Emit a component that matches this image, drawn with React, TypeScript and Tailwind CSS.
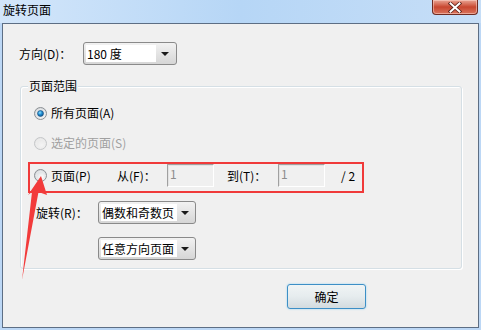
import React from "react";

const FONT = { fontFamily: '"Noto Sans CJK SC", "Noto Sans", sans-serif' };

function Radio({ id, checked, disabled }: { id: string; checked?: boolean; disabled?: boolean }) {
  return (
    <svg width="13" height="13" viewBox="0 0 13 13" className="shrink-0">
      <defs>
        <radialGradient id={`bg-${id}`} cx="0.6" cy="0.65" r="0.7">
          <stop offset="0" stopColor={disabled ? "#f4f4f4" : "#ffffff"} />
          <stop offset="1" stopColor={disabled ? "#e4e4e4" : "#cfd3d6"} />
        </radialGradient>
        <radialGradient id={`dot-${id}`} cx="0.4" cy="0.35" r="0.7">
          <stop offset="0" stopColor="#8fe0ff" />
          <stop offset="0.5" stopColor="#1c8ad0" />
          <stop offset="1" stopColor="#0d4f8a" />
        </radialGradient>
      </defs>
      <circle cx="6.5" cy="6.5" r="6" fill={`url(#bg-${id})`} stroke={disabled ? "#c4c6c8" : "#8c9094"} strokeWidth="1" />
      <circle cx="6.5" cy="6.5" r="4.2" fill="none" stroke={disabled ? "#eeeeee" : "#e8eaec"} strokeWidth="0.8" />
      {checked && <circle cx="6.5" cy="6.5" r="3" fill={`url(#dot-${id})`} stroke="#1a4f7c" strokeWidth="0.6" />}
    </svg>
  );
}

function Select({ text, width, whiteWidth }: { text: string; width: number; whiteWidth: number }) {
  return (
    <div
      className="h-[23px] rounded-[3px] border border-[#8a8a8a] bg-gradient-to-b from-[#f2f2f2] to-[#d6d6d6] flex items-center p-[2px] shrink-0"
      style={{ width }}
    >
      <div
        className="h-full bg-white flex items-center pl-[1px] text-[12px] leading-[16px] text-black whitespace-nowrap overflow-hidden"
        style={{ width: whiteWidth }}
      >
        {text}
      </div>
      <div className="flex-1 flex items-center justify-center">
        <svg width="8" height="4" viewBox="0 0 8 4">
          <polygon points="0,0 8,0 4,4" fill="#1a1a1a" />
        </svg>
      </div>
    </div>
  );
}

function DisabledInput() {
  return (
    <div className="w-[47px] h-[23px] border-t border-l border-t-[#a0a0a0] border-l-[#a0a0a0] border-b border-r border-b-[#ffffff] border-r-[#ffffff] bg-[#f0f0f0] shadow-[inset_1px_1px_0_#e3e3e3] text-[12px] leading-[16px] text-[#8d8d8d] pl-[2px] pt-[1px] shrink-0">
      1
    </div>
  );
}

export default function App() {
  return (
    <div className="relative w-[481px] h-[330px] overflow-hidden bg-[#bcd7f5]" style={FONT}>
      {/* Title bar */}
      <div className="h-[23px] flex items-start bg-gradient-to-r from-[#d3e6fa] via-[#b6d6f6] to-[#c6def7] relative">
        <div className="pl-[3px] pt-[2px] text-[12px] leading-[16px] text-black">旋转页面</div>
        <div className="absolute left-[432px] top-0 w-[46px] h-[15px] rounded-b-[4px] border border-t-0 border-[#6e2b22] bg-gradient-to-b from-[#e8a494] via-[#c8462f] to-[#d9735c] flex items-center justify-center shadow-[inset_0_0_0_1px_rgba(255,220,210,0.5)]">
          <svg width="14" height="11" viewBox="0 0 14 11">
            <path d="M2.5 1.5 L11.5 9.5 M11.5 1.5 L2.5 9.5" stroke="#5a1f17" strokeWidth="3.6" strokeLinecap="square" />
            <path d="M2.5 1.5 L11.5 9.5 M11.5 1.5 L2.5 9.5" stroke="#ffffff" strokeWidth="2" strokeLinecap="square" />
          </svg>
        </div>
      </div>

      {/* Client area */}
      <div className="ml-[2px] w-[477px] h-[305px] border border-[#5d6e84] bg-[#f0f0f0] text-[12px] leading-[16px] text-black">
        {/* Direction row */}
        <div className="mt-[18px] h-[23px] flex items-center pl-[16px]">
          <div className="w-[64px]">方向(D)：</div>
          <Select text="180 度" width={94} whiteWidth={70} />
        </div>

        {/* Group box */}
        <div className="relative ml-[17px] mt-[21px] w-[442px] h-[183px] border border-[#d5dfe5] rounded-[3px] shadow-[inset_1px_1px_0_#ffffff,1px_1px_0_#ffffff]">
          <div className="absolute left-[7px] top-[-9px] px-[1px] bg-[#f0f0f0] leading-[16px]">页面范围</div>

          <div className="flex flex-col">
            <div className="mt-[18px] h-[16px] pl-[13px] flex items-center gap-[4px]">
              <Radio id="a" checked />
              <span>所有页面(A)</span>
            </div>
            <div className="mt-[14px] h-[16px] pl-[13px] flex items-center gap-[4px] text-[#a0a0a0]">
              <Radio id="s" disabled />
              <span>选定的页面(S)</span>
            </div>

            <div className="mt-[11px] ml-[7px] w-[336px] h-[31px] border-2 border-[#f03a3a] flex items-start">
              <div className="h-[23px] flex items-center pl-[4px]">
                <Radio id="p" />
                <span className="ml-[4px] w-[66px]">页面(P)</span>
                <span className="w-[50px]">从(F)：</span>
                <DisabledInput />
                <span className="ml-[13px] w-[51px]">到(T)：</span>
                <DisabledInput />
                <span className="ml-[16px]">/ 2</span>
              </div>
            </div>

            <div className="mt-[8px] h-[23px] flex items-center pl-[15px]">
              <div className="w-[62px]">旋转(R)：</div>
              <Select text="偶数和奇数页" width={98} whiteWidth={76} />
            </div>
            <div className="mt-[13px] h-[23px] flex items-center pl-[77px]">
              <Select text="任意方向页面" width={98} whiteWidth={76} />
            </div>
          </div>
        </div>

        {/* OK button */}
        <div className="ml-[284px] mt-[15px] w-[79px] h-[25px] rounded-[3px] border border-[#3d8fc6] shadow-[0_0_2px_#8fd0f2] bg-gradient-to-b from-[#f0f4f5] via-[#e6ecee] to-[#d3dbdf] flex items-center justify-center">
          <span className="leading-[16px]">确定</span>
        </div>
      </div>

      {/* Red arrow overlay */}
      <svg className="absolute left-0 top-0 pointer-events-none" width="481" height="330" viewBox="0 0 481 330">
        <polygon points="41,176 47,195 38.5,192 22,280 32,192 28,195" fill="#f23b3b" />
      </svg>
    </div>
  );
}
